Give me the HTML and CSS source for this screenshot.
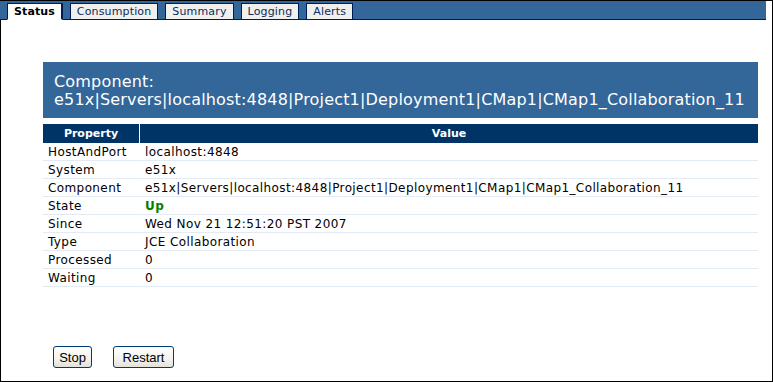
FILE: index.html
```html
<!DOCTYPE html>
<html>
<head>
<meta charset="utf-8">
<link rel="stylesheet" href="styles.css">
</head>
<body>
<div class="window">
  <div class="tabbar">
    <span class="tab active">Status</span>
    <span class="tab">Consumption</span>
    <span class="tab">Summary</span>
    <span class="tab">Logging</span>
    <span class="tab">Alerts</span>
  </div>
  <div class="content">
    <div class="title">Component:<br>e51x|Servers|localhost:4848|Project1|Deployment1|CMap1|CMap1_Collaboration_11</div>
    <table class="props">
      <thead>
        <tr><th class="prop">Property</th><th>Value</th></tr>
      </thead>
      <tbody>
        <tr><td class="prop">HostAndPort</td><td>localhost:4848</td></tr>
        <tr><td class="prop">System</td><td>e51x</td></tr>
        <tr><td class="prop">Component</td><td>e51x|Servers|localhost:4848|Project1|Deployment1|CMap1|CMap1_Collaboration_11</td></tr>
        <tr><td class="prop">State</td><td><span class="up">Up</span></td></tr>
        <tr><td class="prop">Since</td><td>Wed Nov 21 12:51:20 PST 2007</td></tr>
        <tr><td class="prop">Type</td><td>JCE Collaboration</td></tr>
        <tr><td class="prop">Processed</td><td>0</td></tr>
        <tr><td class="prop">Waiting</td><td>0</td></tr>
      </tbody>
    </table>
    <div class="actions">
      <button class="btn btn-stop">Stop</button>
      <button class="btn btn-restart">Restart</button>
    </div>
  </div>
</div>
</body>
</html>
```
FILE: styles.css
```css
html, body {
  margin: 0;
  padding: 0;
  background: #fff;
}
.window {
  width: 773px;
  height: 382px;
  box-sizing: border-box;
  border-top: 1px solid #000;
  border-right: 1px solid #000;
  border-bottom: 1px solid #000;
  display: flex;
  flex-direction: column;
  font-family: "DejaVu Sans", Verdana, sans-serif;
}
.tabbar {
  width: 759px;
  height: 18px;
  flex: none;
  background: #336699;
  border-bottom: 1px solid #001a57;
  display: flex;
  align-items: flex-end;
  gap: 7px;
  padding-left: 7px;
}
.tab {
  height: 15px;
  line-height: 15px;
  margin-bottom: -1px;
  padding: 0 6px;
  border: 1px solid #001a57;
  background: #f0f0ee;
  color: #0f2a5a;
  font-size: 11px;
  letter-spacing: 0.15px;
  white-space: nowrap;
}
.tab.active {
  background: #fff;
  color: #000;
  font-weight: bold;
  letter-spacing: 0.1px;
  border-bottom-color: #fff;
  border-right-width: 2px;
}
.content {
  flex: 1;
  border-left: 1px solid #000;
  padding-left: 42px;
}
.title {
  width: 715px;
  box-sizing: border-box;
  margin-top: 42px;
  padding: 11px 11px 9px;
  background: #336699;
  color: #fff;
  font-size: 16px;
  line-height: 18px;
  letter-spacing: 0.18px;
}
.props {
  margin-top: 6px;
  width: 715px;
  border-collapse: separate;
  border-spacing: 0;
  table-layout: fixed;
  font-size: 12px;
  letter-spacing: 0.4px;
}
.props th {
  height: 19px;
  padding: 0;
  background: #003366;
  color: #fff;
  font-size: 11px;
  font-weight: bold;
  letter-spacing: 0;
  line-height: 19px;
  text-align: center;
}
.props .prop {
  width: 97px;
  box-sizing: border-box;
  border-right: 1px solid #fff;
}
.props td {
  height: 18px;
  box-sizing: border-box;
  padding: 1px 0 0 5px;
  line-height: 16px;
  color: #000;
  border-bottom: 1px solid #e2ebf5;
  white-space: nowrap;
}
.up {
  color: #008000;
  font-weight: bold;
}
.actions {
  margin-top: 59px;
  margin-left: 10px;
  display: flex;
  gap: 21px;
}
.btn {
  height: 22px;
  padding: 0;
  border: 1px solid #003c74;
  border-radius: 3px;
  background: linear-gradient(#ffffff, #f3f2ee 60%, #e3e1d8);
  font-family: "Liberation Sans", Arial, sans-serif;
  font-size: 13px;
  color: #000;
}
.btn-stop {
  width: 39px;
}
.btn-restart {
  width: 61px;
}
```
